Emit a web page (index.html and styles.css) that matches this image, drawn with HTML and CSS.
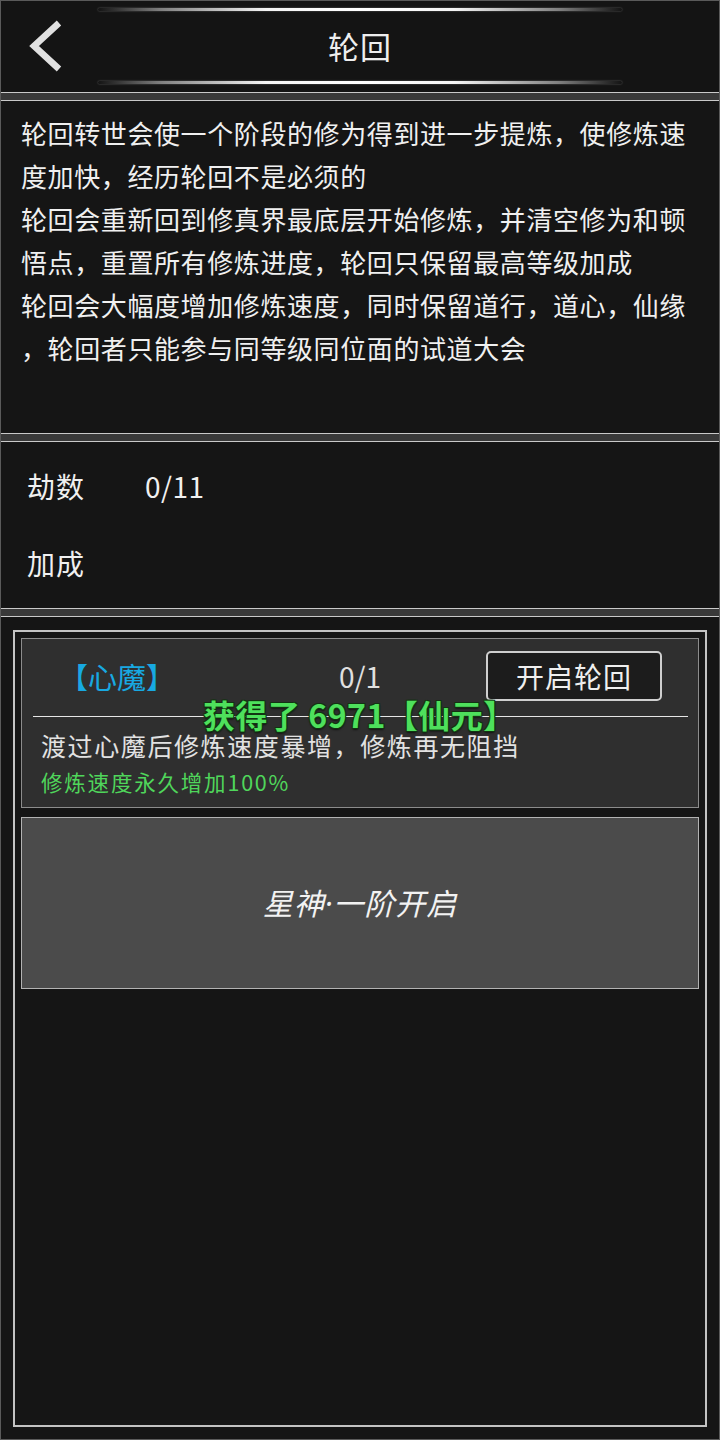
FILE: index.html
```html
<!DOCTYPE html>
<html lang="zh-CN">
<head>
<meta charset="utf-8">
<title>轮回</title>
<link rel="stylesheet" href="styles.css">
</head>
<body>
<div class="page">
  <header class="topbar">
    <div class="glow-line"></div>
    <div class="title-row">
      <a class="back" href="#" aria-label="返回">
        <svg width="36" height="52" viewBox="0 0 36 52">
          <polyline points="31,3 6,26 31,49" fill="none" stroke="#e0e0e0" stroke-width="6.5" stroke-linejoin="miter"/>
        </svg>
      </a>
      <h1 class="title">轮回</h1>
      <span></span>
    </div>
    <div class="glow-line"></div>
  </header>

  <div class="sep"></div>

  <section class="intro">
    <p>轮回转世会使一个阶段的修为得到进一步提炼，使修炼速度加快，经历轮回不是必须的</p>
    <p>轮回会重新回到修真界最底层开始修炼，并清空修为和顿悟点，重置所有修炼进度，轮回只保留最高等级加成</p>
    <p>轮回会大幅度增加修炼速度，同时保留道行，道心，仙缘，轮回者只能参与同等级同位面的试道大会</p>
  </section>

  <div class="sep"></div>

  <section class="stats">
    <div class="stat-row"><span class="stat-label">劫数</span><span class="stat-value">0/11</span></div>
    <div class="stat-row"><span class="stat-label">加成</span><span class="stat-value"></span></div>
  </section>

  <div class="sep"></div>

  <section class="trials">
    <div class="frame">
      <div class="card">
        <div class="card-head">
          <span class="trial-name">【心魔】</span>
          <span class="trial-count">0/1</span>
          <button class="start-btn">开启轮回</button>
        </div>
        <div class="card-rule"></div>
        <p class="trial-desc">渡过心魔后修炼速度暴增，修炼再无阻挡</p>
        <p class="trial-bonus">修炼速度永久增加100%</p>
        <div class="toast">获得了 6971【仙元】</div>
      </div>
      <div class="locked">星神·一阶开启</div>
    </div>
  </section>
</div>
</body>
</html>
```

FILE: styles.css
```css
* { box-sizing: border-box; }

html, body {
  margin: 0;
  padding: 0;
  background: #151515;
}

body {
  font-family: "Noto Sans CJK SC", "Noto Sans", sans-serif;
  color: #eeeeee;
}

.page {
  width: 720px;
  height: 1440px;
  border: 1px solid #5a5a5a;
  background: #151515;
  display: flex;
  flex-direction: column;
}

/* header */
.topbar {
  height: 91px;
  padding-top: 7px;
  display: flex;
  flex-direction: column;
  background: #141414;
}

.glow-line {
  width: 524px;
  height: 3px;
  margin: 0 auto;
  border-radius: 2px;
  background: linear-gradient(90deg, rgba(255,255,255,0) 0%, rgba(200,200,200,0.6) 12%, #f4f4f4 32%, #ffffff 50%, #f4f4f4 68%, rgba(200,200,200,0.6) 88%, rgba(255,255,255,0) 100%);
  box-shadow: 0 0 2px rgba(255,255,255,0.35);
}

.title-row {
  height: 70px;
  display: grid;
  grid-template-columns: 1fr auto 1fr;
  align-items: center;
}

.back {
  display: flex;
  align-items: center;
  padding-left: 27px;
  height: 52px;
}

.title {
  margin: 0;
  font-size: 31px;
  font-weight: 400;
  color: #eeeeee;
  letter-spacing: 1px;
  line-height: 40px;
}

/* separators */
.sep {
  height: 9px;
  flex: none;
  background: #393939;
  border-top: 1px solid #c9c9c9;
  border-bottom: 1px solid #c9c9c9;
}

/* intro */
.intro {
  height: 332px;
  flex: none;
  padding: 10px 23px 0 20px;
}

.intro p {
  margin: 0;
  font-size: 26px;
  line-height: 43px;
  letter-spacing: 0.6px;
  color: #f0f0f0;
  line-break: anywhere;
}

/* stats */
.stats {
  height: 166px;
  flex: none;
  padding: 24px 0 0 26px;
  display: flex;
  flex-direction: column;
  gap: 37px;
}

.stat-row {
  height: 40px;
  display: flex;
  align-items: center;
  font-size: 28px;
  color: #f0f0f0;
}

.stat-label {
  width: 58px;
  letter-spacing: 1px;
}

.stat-value {
  margin-left: 60px;
  letter-spacing: 0.5px;
}

/* trials */
.trials {
  flex: 1;
  padding: 13px 12px 12px 12px;
  display: flex;
  flex-direction: column;
}

.frame {
  flex: 1;
  border: 2px solid #c3c3c3;
  padding: 6px;
}

.card {
  position: relative;
  border: 1px solid #8c8c8c;
  background: #2f2f2f;
  padding: 12px 0 10px 0;
}

.card-head {
  height: 50px;
  display: flex;
  align-items: center;
}

.trial-name {
  margin-left: 37px;
  width: 116px;
  font-size: 29px;
  color: #18a9e2;
  line-height: 40px;
}

.trial-count {
  margin-left: 155px;
  width: 60px;
  text-align: center;
  font-size: 28px;
  color: #e0e0e0;
}

.start-btn {
  margin-left: 96px;
  width: 176px;
  height: 50px;
  border: 2px solid #cfcfcf;
  border-radius: 5px;
  background: #1c1c1c;
  color: #efefef;
  font-family: "Noto Sans CJK SC", "Noto Sans", sans-serif;
  font-size: 28px;
  letter-spacing: 1px;
  padding: 0;
}

.card-rule {
  height: 1px;
  margin: 15px 10px 0 11px;
  background: #e6e6e6;
}

.trial-desc {
  margin: 12px 0 0 19px;
  font-size: 25px;
  line-height: 32px;
  letter-spacing: 1.6px;
  color: #e2e2e2;
}

.trial-bonus {
  margin: 6px 0 0 19px;
  font-size: 21.5px;
  line-height: 30px;
  letter-spacing: 1.8px;
  color: #4fd65b;
}

.toast {
  position: absolute;
  left: 181px;
  top: 57px;
  font-size: 32px;
  font-weight: 700;
  line-height: 36px;
  letter-spacing: 0.5px;
  color: #4ee05c;
  white-space: nowrap;
  text-shadow:
    1px 1px 0 #123312, -1px -1px 0 #123312,
    1px -1px 0 #123312, -1px 1px 0 #123312,
    0 2px 2px rgba(0,0,0,0.6);
}

.locked {
  margin-top: 9px;
  height: 172px;
  border: 1px solid #b3b3b3;
  background: #4b4b4b;
  display: flex;
  align-items: center;
  justify-content: center;
  padding-bottom: 3px;
  font-family: "Noto Sans", "Noto Sans CJK SC", sans-serif;
  font-size: 30px;
  font-style: italic;
  color: #f2f2f2;
  letter-spacing: 1px;
}
```
